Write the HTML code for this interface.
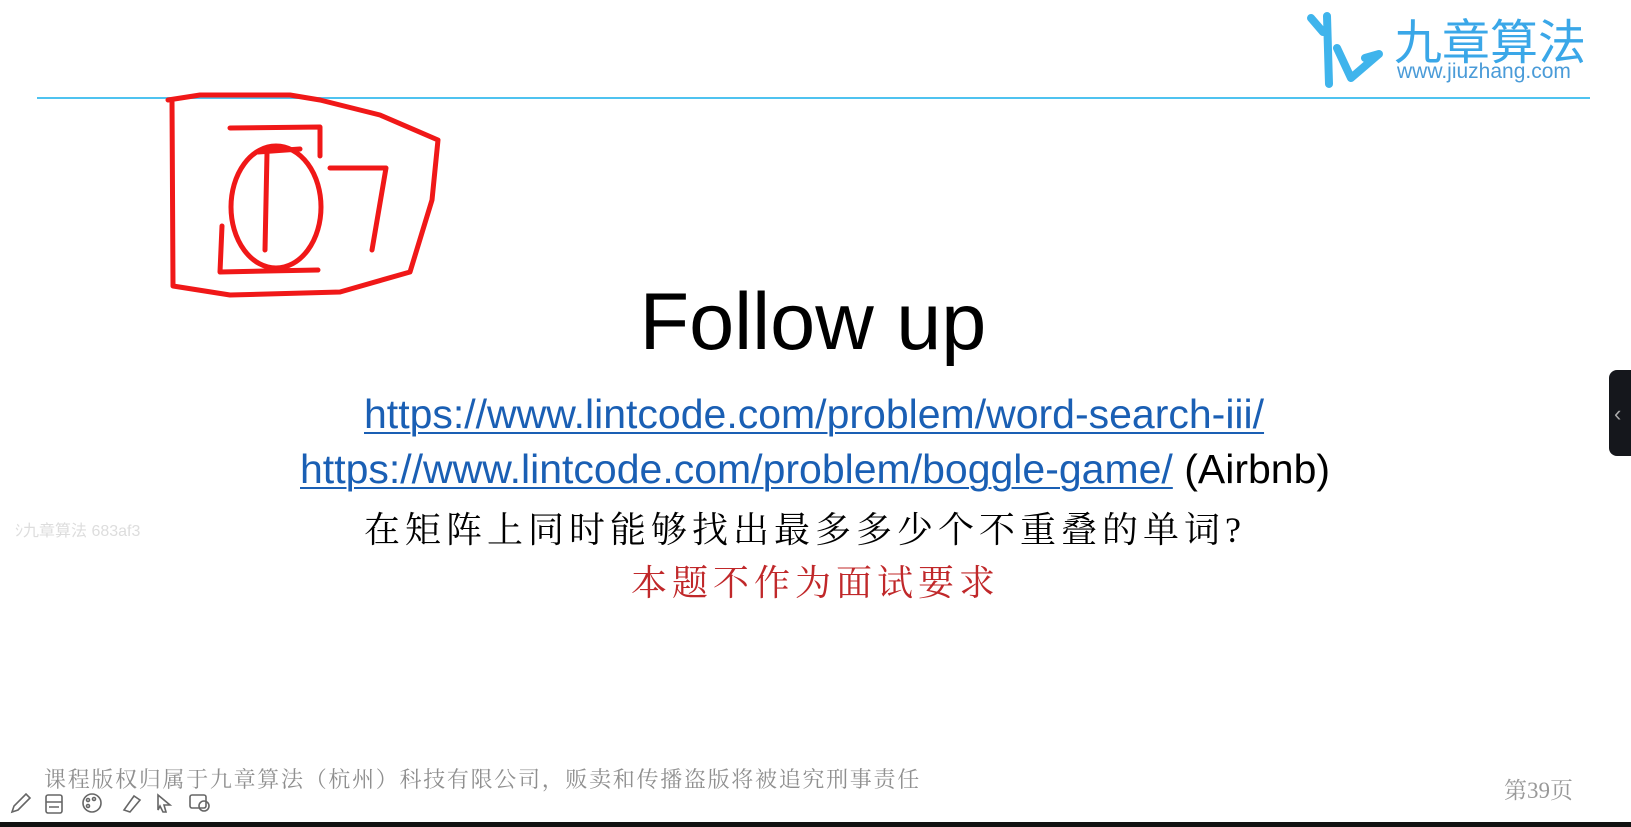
<!DOCTYPE html>
<html><head><meta charset="utf-8"><style>
body{margin:0;width:1631px;height:827px;background:#fff;position:relative;overflow:hidden;font-family:"Liberation Sans","Noto Sans CJK SC",sans-serif}
.a{position:absolute;white-space:nowrap}
.link{color:#1a5fb4;text-decoration:underline;text-decoration-thickness:2px;text-underline-offset:4px}
.ser{font-family:"Liberation Serif","Noto Serif CJK SC",serif}
</style></head><body>
<div class="a" style="left:37px;top:97px;width:1553px;height:2px;background:#4fc3f0"></div>
<svg class="a" style="left:1305px;top:8px" width="80" height="80" viewBox="0 0 80 80">
<path d="M6 10 L18 24 M22 8 L24 76 M32 40 L46 70 L74 46 L60 50" stroke="#3fb4ec" stroke-width="8" fill="none" stroke-linecap="round" stroke-linejoin="round"/>
</svg>
<div class="a" style="left:1394px;top:3px;font-size:48px;color:#3aa7e8">九章算法</div>
<div class="a" style="left:1397px;top:60px;font-size:21px;color:#4a9bd8">www.jiuzhang.com</div>
<svg class="a" style="left:0;top:0" width="460" height="310" viewBox="0 0 460 310">
<g stroke="#f01818" stroke-width="5" fill="none" stroke-linecap="round" stroke-linejoin="round">
<path d="M172 100 L173 286 L230 295 L340 292 L410 272 L432 200 L438 140 L380 115 L320 100 L290 95 L200 95 L168 100"/>
<path d="M230 128 L320 127 L320 156"/>
<ellipse cx="276" cy="207" rx="45" ry="61"/>
<path d="M258 152 L300 149 M267 153 L265 250"/>
<path d="M222 226 L220 272 L318 270"/>
<path d="M330 168 L386 168 L372 250"/>
</g></svg>
<div class="a" style="left:0;width:1626px;text-align:center;top:276px;font-size:81px;color:#000">Follow up</div>
<div class="a link" style="left:364px;top:391px;font-size:41px">https://www.lintcode.com/problem/word-search-iii/</div>
<div class="a" style="left:300px;top:446px;font-size:41px;color:#000"><span class="link">https://www.lintcode.com/problem/boggle-game/</span> (Airbnb)</div>
<div class="a ser" style="left:364px;top:502px;font-size:36px;color:#000;letter-spacing:5px">在矩阵上同时能够找出最多多少个不重叠的单词?</div>
<div class="a ser" style="left:631px;top:555px;font-size:36px;color:#c0282a;letter-spacing:5px">本题不作为面试要求</div>
<div class="a" style="left:15px;top:517px;font-size:16px;color:#ddd">ｼ九章算法 683af3</div>
<div class="a ser" style="left:44px;top:763px;font-size:22px;color:#8f8f8f;letter-spacing:1.7px">课程版权归属于九章算法（杭州）科技有限公司，贩卖和传播盗版将被追究刑事责任</div>
<div class="a ser" style="left:1504px;top:772px;font-size:23px;color:#999">第39页</div>
<svg class="a" style="left:8px;top:790px" width="210" height="26" viewBox="0 0 210 26">
<g stroke="#666" stroke-width="1.6" fill="none">
<path d="M4 22 L6 16 L18 4 L22 8 L10 20 Z"/>
<rect x="38" y="5" width="16" height="18" rx="2"/><path d="M38 12 H54 M41 17 H51"/>
<circle cx="84" cy="13" r="9"/><circle cx="80" cy="10" r="1.5"/><circle cx="86" cy="9" r="1.5"/><circle cx="80" cy="16" r="1.5"/>
<path d="M116 20 L126 6 L132 10 L122 22 Z"/>
<path d="M150 5 L162 15 L156 15 L158 22 L155 22 L152 16 L150 20 Z"/>
<rect x="182" y="5" width="16" height="13" rx="2"/><circle cx="196" cy="16" r="5"/>
</g></svg>
<div class="a" style="left:0;top:822px;width:1631px;height:5px;background:#111"></div>
<div class="a" style="left:1609px;top:370px;width:22px;height:86px;background:#15171c;border-radius:8px 0 0 8px"></div>
<div class="a" style="left:1614px;top:401px;font-size:22px;color:#aaa">‹</div>
</body></html>
